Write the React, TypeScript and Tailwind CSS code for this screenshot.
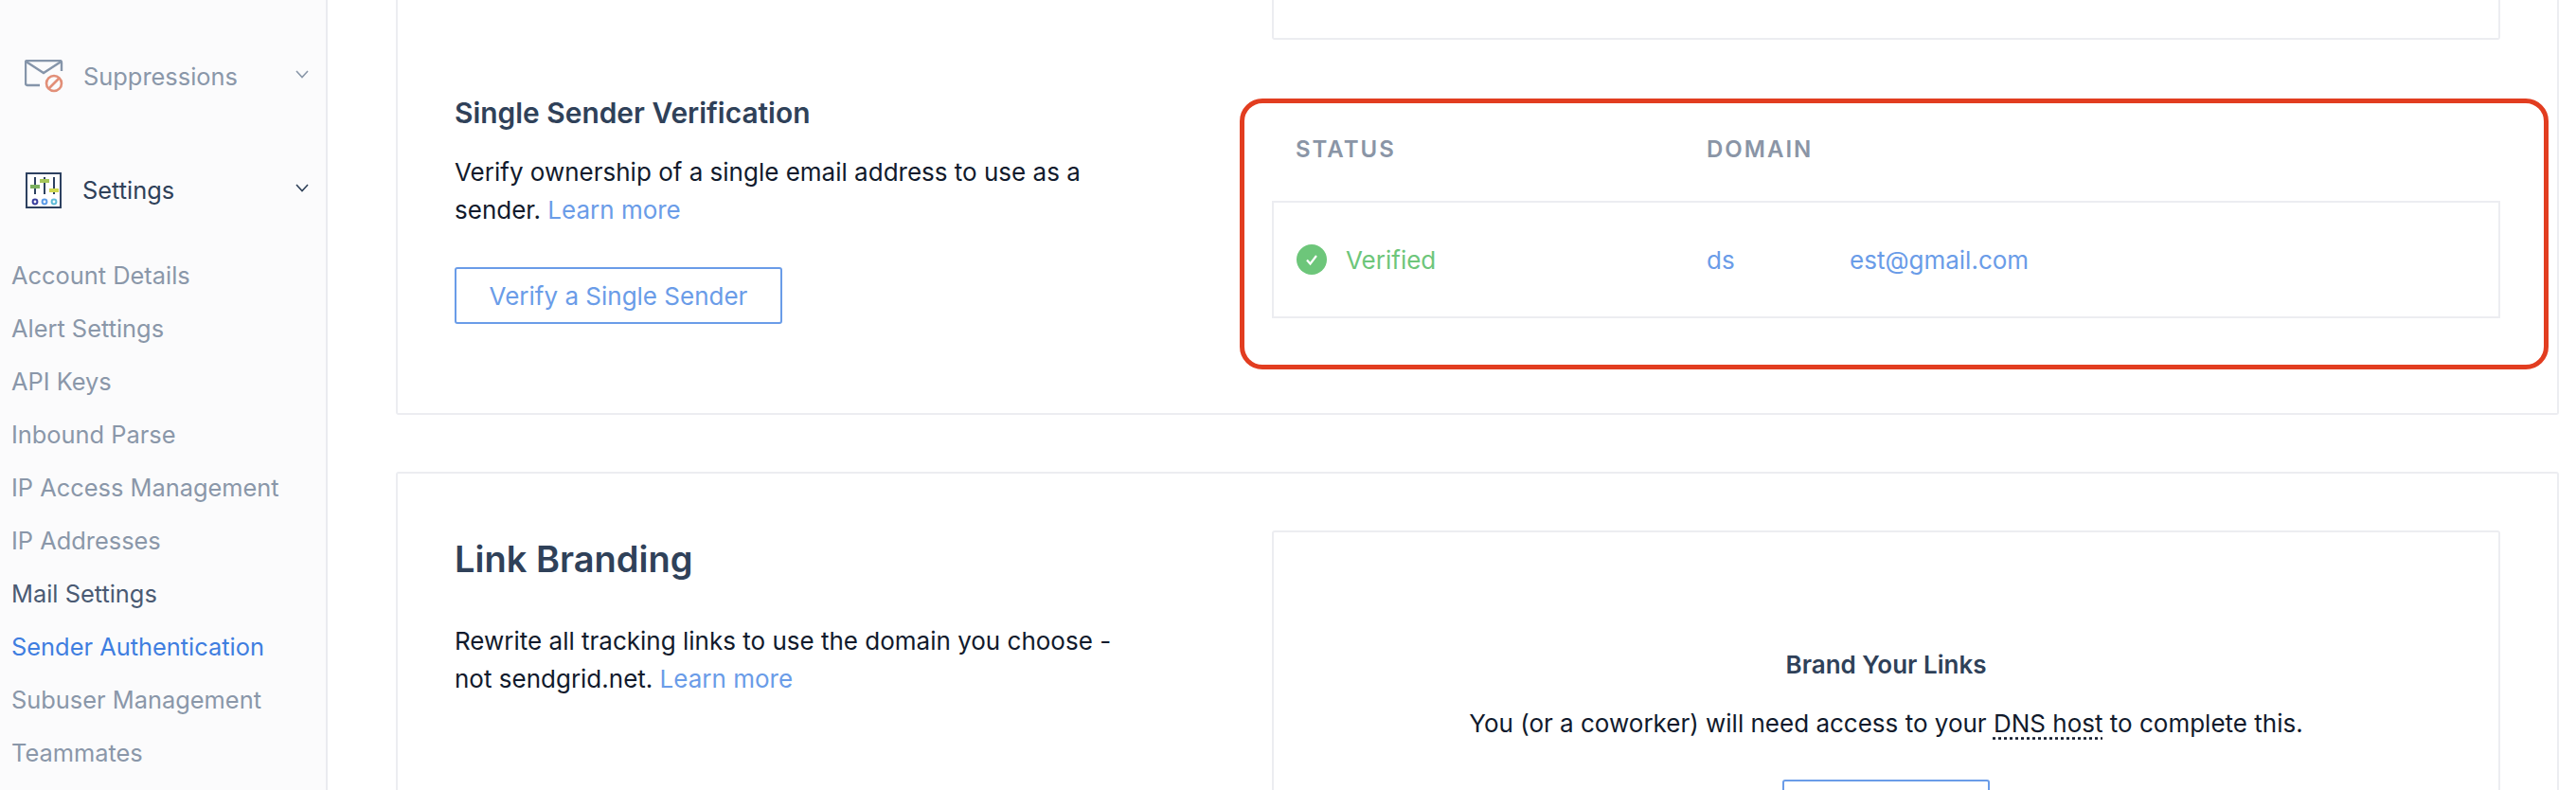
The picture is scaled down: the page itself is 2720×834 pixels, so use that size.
const font = "font-['Inter','Liberation_Sans',sans-serif]";

const settingsLinks = [
  { label: 'Account Details', color: 'text-[#8a97a9]' },
  { label: 'Alert Settings', color: 'text-[#8a97a9]' },
  { label: 'API Keys', color: 'text-[#8a97a9]' },
  { label: 'Inbound Parse', color: 'text-[#8a97a9]' },
  { label: 'IP Access Management', color: 'text-[#8a97a9]' },
  { label: 'IP Addresses', color: 'text-[#8a97a9]' },
  { label: 'Mail Settings', color: 'text-[#4a5a73]' },
  { label: 'Sender Authentication', color: 'text-[#3f7ee0]' },
  { label: 'Subuser Management', color: 'text-[#8a97a9]' },
  { label: 'Teammates', color: 'text-[#8a97a9]' },
];

const Chevron = ({ color }: { color: string }) => (
  <svg width="14" height="9" viewBox="0 0 14 9" fill="none" stroke={color} strokeWidth="1.6" className="absolute left-[312px] top-0">
    <path d="M1 1l6 6.5L13 1" />
  </svg>
);

const SuppressionsIcon = () => (
  <svg width="42" height="36" viewBox="0 0 42 36" fill="none">
    <path d="M16 27H3a2 2 0 01-2-2V3a2 2 0 012-2h34a2 2 0 012 2v9" stroke="#8595aa" strokeWidth="2.4" />
    <path d="M1.5 2L20 14 38.5 2" stroke="#8595aa" strokeWidth="2.4" />
    <circle cx="31" cy="25" r="8" fill="#fbfbfc" stroke="#e28f78" strokeWidth="2.6" />
    <path d="M25.5 30.5l11-11" stroke="#e28f78" strokeWidth="2.6" />
  </svg>
);

const SettingsIcon = () => (
  <svg width="38" height="38" viewBox="0 0 38 38" fill="none">
    <rect x="1" y="1" width="36" height="36" fill="#fff" stroke="#2d4160" strokeWidth="2" />
    <path d="M10 5v18M20 5v18M30 5v18" stroke="#2d4160" strokeWidth="2" />
    <rect x="5" y="13" width="10" height="4" fill="#7bb05f" />
    <rect x="15" y="7" width="10" height="4" fill="#a5c65a" />
    <rect x="25" y="17" width="10" height="4" fill="#cfd94f" />
    <circle cx="10" cy="31" r="2.4" stroke="#3a3f9e" strokeWidth="2" />
    <circle cx="20" cy="31" r="2.4" stroke="#5b9be8" strokeWidth="2" />
    <circle cx="30" cy="31" r="2.4" stroke="#5fbcd8" strokeWidth="2" />
  </svg>
);

const Sidebar = () => (
  <aside className="w-[346px] h-full shrink-0 bg-[#fbfbfc] border-r-2 border-[#eaebef] text-[25.4px]">
    <div className="relative flex items-center h-[40px] mt-[61px] pl-[26px]">
      <SuppressionsIcon />
      <span className="ml-[20px] text-[#8a97a9]">Suppressions</span>
      <span className="absolute left-0 top-[13px]"><Chevron color="#8a97a9" /></span>
    </div>
    <div className="relative flex items-center h-[40px] mt-[80px] pl-[27px]">
      <SettingsIcon />
      <span className="ml-[22px] text-[#2f4159]">Settings</span>
      <span className="absolute left-0 top-[13px]"><Chevron color="#2f4159" /></span>
    </div>
    <nav className="mt-[42px] pl-[12px] flex flex-col">
      {settingsLinks.map((l) => (
        <a key={l.label} className={`h-[56px] leading-[56px] ${l.color}`}>{l.label}</a>
      ))}
    </nav>
  </aside>
);

const Learn = () => <a className="text-[#6a9ce8]">Learn more</a>;

export default function App() {
  return (
    <div className={`${font} flex h-[834px] w-[2720px] overflow-hidden bg-white text-[26px] text-[#111a2c]`}>
      <Sidebar />
      <main className="flex-1 pl-[72px] pr-[18px]">
        {/* Sender card, cut by the top of the window */}
        <section className="relative flex h-[438px] border-2 border-t-0 border-[#eceDf1] rounded-b-[3px] pl-[60px] pr-[60px]">
          <div className="w-[863px] shrink-0 pt-[99px]">
            <h3 className="text-[29.9px] leading-[40px] font-semibold text-[#2f4159]">Single Sender Verification</h3>
            <p className="mt-[23px] w-[720px] leading-[40px]">
              Verify ownership of a single email address to use as a sender. <Learn />
            </p>
            <button className="mt-[40px] block h-[60px] w-[346px] border-2 border-[#6a9ce8] rounded-[3px] text-[#6a9ce8]">
              Verify a Single Sender
            </button>
          </div>
          <div className="flex-1">
            <div className="h-[42px] border-2 border-t-0 border-[#eceDf1] rounded-b-[3px]" />
            <div className="flex h-[170px] items-center pt-[61px] pl-[25px] text-[24px] font-semibold tracking-[2px] text-[#8a95a6]">
              <span className="w-[434px]">STATUS</span>
              <span>DOMAIN</span>
            </div>
            <div className="flex h-[124px] items-center border-2 border-[#eceDf1] pl-[24px]">
              <div className="flex w-[433px] items-center text-[#6dc67a]">
                <svg width="32" height="32" viewBox="0 0 32 32" className="shrink-0">
                  <circle cx="16" cy="16" r="16" fill="#6dc67a" />
                  <path d="M11 16.5l3.5 4L21 12" fill="none" stroke="#fff" strokeWidth="2.2" />
                </svg>
                <span className="ml-[20px] mt-[1px]">Verified</span>
              </div>
              <a className="text-[#6a9ce8] w-[151px]">ds</a>
              <a className="text-[#6a9ce8]">est@gmail.com</a>
            </div>
          </div>
          {/* Red annotation drawn on the screenshot */}
          <div className="absolute left-[889px] top-[104px] h-[286px] w-[1382px] rounded-[24px] border-[5px] border-[#e23d20]" />
        </section>

        {/* Link branding card */}
        <section className="mt-[60px] flex h-[400px] border-2 border-[#eceDf1] rounded-[3px] pl-[60px] pr-[60px] pt-[60px]">
          <div className="w-[863px] shrink-0">
            <h2 className="mt-[8px] text-[38px] leading-[44px] font-semibold text-[#2f4159]">Link Branding</h2>
            <p className="mt-[45px] w-[720px] leading-[40px]">
              Rewrite all tracking links to use the domain you choose - not sendgrid.net. <Learn />
            </p>
          </div>
          <div className="flex-1 h-[400px] border-2 border-[#eceDf1] rounded-[3px] flex flex-col items-center pt-[122px]">
            <h4 className="leading-[36px] font-semibold text-[#2f4159]">Brand Your Links</h4>
            <p className="mt-[26px] leading-[36px]">
              You (or a coworker) will need access to your{' '}
              <span className="underline decoration-dotted underline-offset-[5px]">DNS host</span> to complete this.
            </p>
            <button className="mt-[41px] h-[60px] w-[219px] shrink-0 border-2 border-[#6a9ce8] rounded-[3px]" />
          </div>
        </section>
      </main>
    </div>
  );
}
